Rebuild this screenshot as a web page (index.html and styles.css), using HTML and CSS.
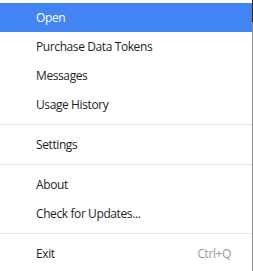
FILE: index.html
```html
<!DOCTYPE html>
<html lang="en">
<head>
    <meta charset="UTF-8">
    <title>Menu</title>
    <link rel="stylesheet" href="styles.css">
</head>
<body>
    <div class="edge"></div>
    <ul class="menu">
        <li class="item active">Open</li>
        <li class="item">Purchase Data Tokens</li>
        <li class="item">Messages</li>
        <li class="item">Usage History</li>
        <li class="sep"></li>
        <li class="item">Settings</li>
        <li class="sep"></li>
        <li class="item">About</li>
        <li class="item">Check for Updates...</li>
        <li class="sep"></li>
        <li class="item">Exit <span class="key">Ctrl+Q</span></li>
    </ul>
</body>
</html>
```

FILE: styles.css
```css
body {
    margin: 0;
    padding: 0;
    background: #ffffff;
    font-family: "Open Sans", "Noto Sans", sans-serif;
    font-size: 12px;
    letter-spacing: -0.4px;
    width: 253px;
    height: 271px;
    overflow: hidden;
    position: relative;
}
.menu {
    list-style-type: none;
    margin: 0;
    padding: 3px 0;
    width: 252px;
    height: 265px;
    border-right: 1px solid #8a8a8a;
    background: #ffffff;
}
.edge {
    position: absolute;
    top: 0;
    right: 0;
    width: 1px;
    height: 22px;
    background: #3a2414;
}
.item {
    display: flex;
    justify-content: space-between;
    align-items: center;
    height: 29px;
    padding: 0 21px 0 36px;
    color: #1e1e1e;
}
.active {
    background-color: #4384f3;
    color: #ffffff;
}
.key {
    color: #999999;
}
.sep {
    height: 1px;
    margin: 5px 0;
    background: #e4e4e4;
}
```
